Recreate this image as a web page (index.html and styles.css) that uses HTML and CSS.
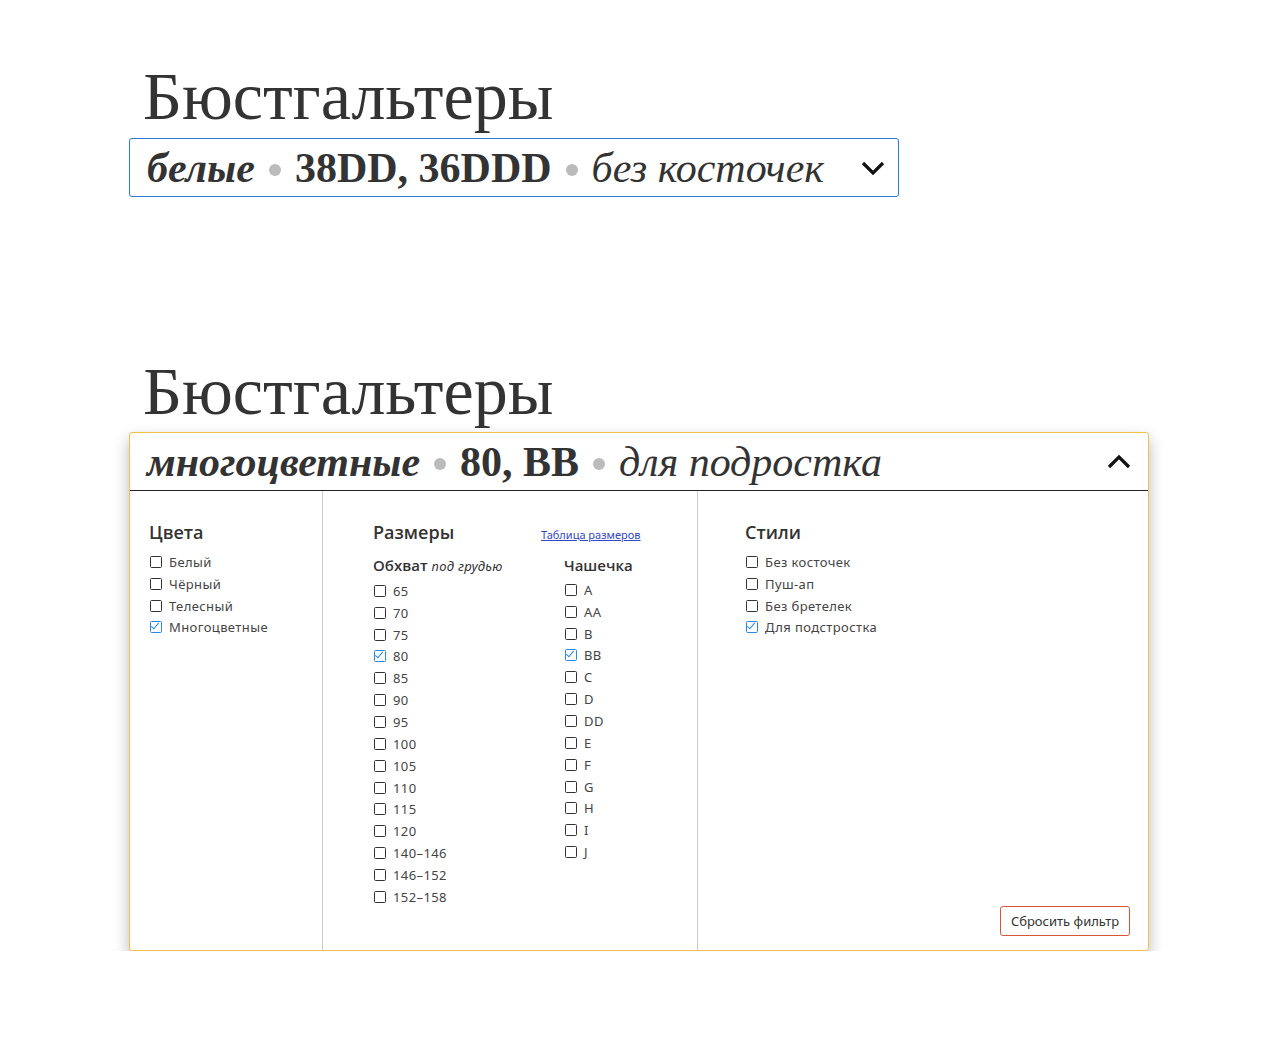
FILE: index.html
```html
<!DOCTYPE html>
<html lang="ru">
  <head>
    <meta charset="UTF-8" />
    <meta name="viewport" content="width=device-width, initial-scale=1.0" />
    <title>Бюстгальтеры</title>
    <link rel="stylesheet" href="styles.css">
  </head>
  <body>
    <div class="page">
      <!-- свёрнутый фильтр -->
      <h1 class="title">Бюстгальтеры</h1>
      <div class="filter closed">
        <div class="summary">
          <span class="s-color">белые</span>
          <span class="dot"></span>
          <span class="s-size">38DD, 36DDD</span>
          <span class="dot"></span>
          <span class="s-style">без косточек</span>
        </div>
        <svg class="chevron" width="26" height="16" viewBox="0 0 26 16">
          <polyline points="3,3 13,13 23,3" />
        </svg>
      </div>

      <!-- раскрытый фильтр -->
      <h1 class="title second">Бюстгальтеры</h1>
      <div class="filter open">
        <div class="filter-head">
          <div class="summary">
            <span class="s-color">многоцветные</span>
            <span class="dot"></span>
            <span class="s-size">80, BB</span>
            <span class="dot"></span>
            <span class="s-style">для подростка</span>
          </div>
          <svg class="chevron" width="26" height="16" viewBox="0 0 26 16">
            <polyline points="3,13 13,3 23,13" />
          </svg>
        </div>

        <div class="filter-body">
          <div class="col col-colors">
            <h2>Цвета</h2>
            <ul class="opts">
              <li><span class="box"></span>Белый</li>
              <li><span class="box"></span>Чёрный</li>
              <li><span class="box"></span>Телесный</li>
              <li class="on"><span class="box"></span>Многоцветные</li>
            </ul>
          </div>

          <div class="col col-sizes">
            <div class="sizes-top">
              <h2>Размеры</h2>
              <a href="#" class="size-table">Таблица размеров</a>
            </div>
            <div class="sizes">
              <div class="sub">
                <h3>Обхват <i>под грудью</i></h3>
                <ul class="opts">
                  <li><span class="box"></span>65</li>
                  <li><span class="box"></span>70</li>
                  <li><span class="box"></span>75</li>
                  <li class="on"><span class="box"></span>80</li>
                  <li><span class="box"></span>85</li>
                  <li><span class="box"></span>90</li>
                  <li><span class="box"></span>95</li>
                  <li><span class="box"></span>100</li>
                  <li><span class="box"></span>105</li>
                  <li><span class="box"></span>110</li>
                  <li><span class="box"></span>115</li>
                  <li><span class="box"></span>120</li>
                  <li><span class="box"></span>140–146</li>
                  <li><span class="box"></span>146–152</li>
                  <li><span class="box"></span>152–158</li>
                </ul>
              </div>
              <div class="sub">
                <h3>Чашечка</h3>
                <ul class="opts">
                  <li><span class="box"></span>A</li>
                  <li><span class="box"></span>AA</li>
                  <li><span class="box"></span>B</li>
                  <li class="on"><span class="box"></span>BB</li>
                  <li><span class="box"></span>C</li>
                  <li><span class="box"></span>D</li>
                  <li><span class="box"></span>DD</li>
                  <li><span class="box"></span>E</li>
                  <li><span class="box"></span>F</li>
                  <li><span class="box"></span>G</li>
                  <li><span class="box"></span>H</li>
                  <li><span class="box"></span>I</li>
                  <li><span class="box"></span>J</li>
                </ul>
              </div>
            </div>
          </div>

          <div class="col col-styles">
            <h2>Стили</h2>
            <ul class="opts">
              <li><span class="box"></span>Без косточек</li>
              <li><span class="box"></span>Пуш-ап</li>
              <li><span class="box"></span>Без бретелек</li>
              <li class="on"><span class="box"></span>Для подстростка</li>
            </ul>
            <button class="reset">Сбросить фильтр</button>
          </div>
        </div>
      </div>
    </div>
  </body>
</html>
```

FILE: styles.css
```css
body {
  margin: 0;
  background-color: #fff;
  color: #333;
  font-family: "Noto Sans", "Open Sans", sans-serif;
}
.page {
  padding: 62px 0 0 129px;
}
.title {
  margin: 0 0 8px 14px;
  font-family: "Liberation Serif", serif;
  font-weight: normal;
  font-size: 68px;
  line-height: 68px;
  color: #333;
}
.title.second {
  margin-top: 160px;
  margin-bottom: 7px;
}

/* строка выбранных значений */
.summary {
  display: flex;
  align-items: center;
  font-family: "Liberation Serif", serif;
  font-size: 42px;
  color: #333;
  white-space: nowrap;
}
.s-color {
  font-style: italic;
  font-weight: bold;
}
.s-size {
  font-weight: bold;
}
.s-style {
  font-style: italic;
}
.dot {
  display: inline-block;
  width: 12px;
  height: 12px;
  border-radius: 50%;
  background-color: #bbb;
  margin: 4px 14px 0;
}
.chevron {
  flex: none;
}
.chevron polyline {
  fill: none;
  stroke: #111;
  stroke-width: 3.2;
}

.filter {
  box-sizing: border-box;
  border-radius: 3px;
  background-color: #fff;
}
.filter.closed {
  width: 770px;
  height: 59px;
  border: 1px solid #2b7bd6;
  display: flex;
  align-items: center;
  justify-content: space-between;
  padding: 0 12px 0 17px;
}
.filter.open {
  width: 1020px;
  border: 1px solid #f1c04d;
  box-shadow: 0 7px 16px rgba(0, 0, 0, 0.28);
}
.filter-head {
  height: 57px;
  border-bottom: 1.5px solid #222;
  display: flex;
  align-items: center;
  justify-content: space-between;
  padding: 0 16px 0 17px;
}

/* колонки фильтра */
.filter-body {
  display: flex;
  height: 459px;
}
.col {
  box-sizing: border-box;
  padding-top: 30px;
}
.col-colors {
  width: 193px;
  padding-left: 19px;
  border-right: 1px solid #ccc;
}
.col-sizes {
  width: 375px;
  padding-left: 50px;
  border-right: 1px solid #ccc;
}
.col-styles {
  flex: 1;
  padding: 30px 18px 14px 47px;
  display: flex;
  flex-direction: column;
}
h2 {
  margin: 0 0 8px;
  font-family: "Open Sans", sans-serif;
  font-size: 18px;
  font-weight: 600;
  line-height: 22px;
  color: #333;
}
h3 {
  margin: 0 0 3px;
  font-family: "Open Sans", sans-serif;
  font-size: 15px;
  font-weight: 600;
  line-height: 22px;
  color: #333;
}
h3 i {
  font-family: "Noto Sans", sans-serif;
  font-weight: normal;
  font-size: 13px;
  letter-spacing: 0.3px;
}
.sizes-top {
  display: flex;
  align-items: baseline;
}
.sizes-top h2 {
  width: 168px;
  margin-bottom: 11px;
}
.size-table {
  font-size: 11px;
  color: #3347c9;
  text-decoration: underline;
}
.sizes {
  display: flex;
}
.sub {
  flex: none;
  width: 191px;
}

/* список чекбоксов */
.opts {
  list-style: none;
  margin: 0;
  padding: 0;
}
.opts li {
  display: flex;
  align-items: center;
  height: 21.85px;
  font-size: 13px;
  letter-spacing: 0.4px;
  color: #444;
}
.box {
  position: relative;
  box-sizing: border-box;
  width: 12px;
  height: 12px;
  margin: 0 7px 0 1px;
  border: 1.8px solid #333;
  border-radius: 1.5px;
}
.opts li.on .box {
  border-color: #2b87e3;
}
.opts li.on .box::after {
  content: "";
  position: absolute;
  left: 2px;
  top: -1.5px;
  width: 3px;
  height: 7px;
  border: solid #2b87e3;
  border-width: 0 1.7px 1.7px 0;
  transform: rotate(40deg);
}

.reset {
  margin-top: auto;
  align-self: flex-end;
  width: 130px;
  height: 30px;
  border: 1px solid #d9553a;
  border-radius: 3px;
  background-color: #fff;
  font-family: "Noto Sans", sans-serif;
  font-size: 13px;
  color: #333;
  cursor: pointer;
}
```
